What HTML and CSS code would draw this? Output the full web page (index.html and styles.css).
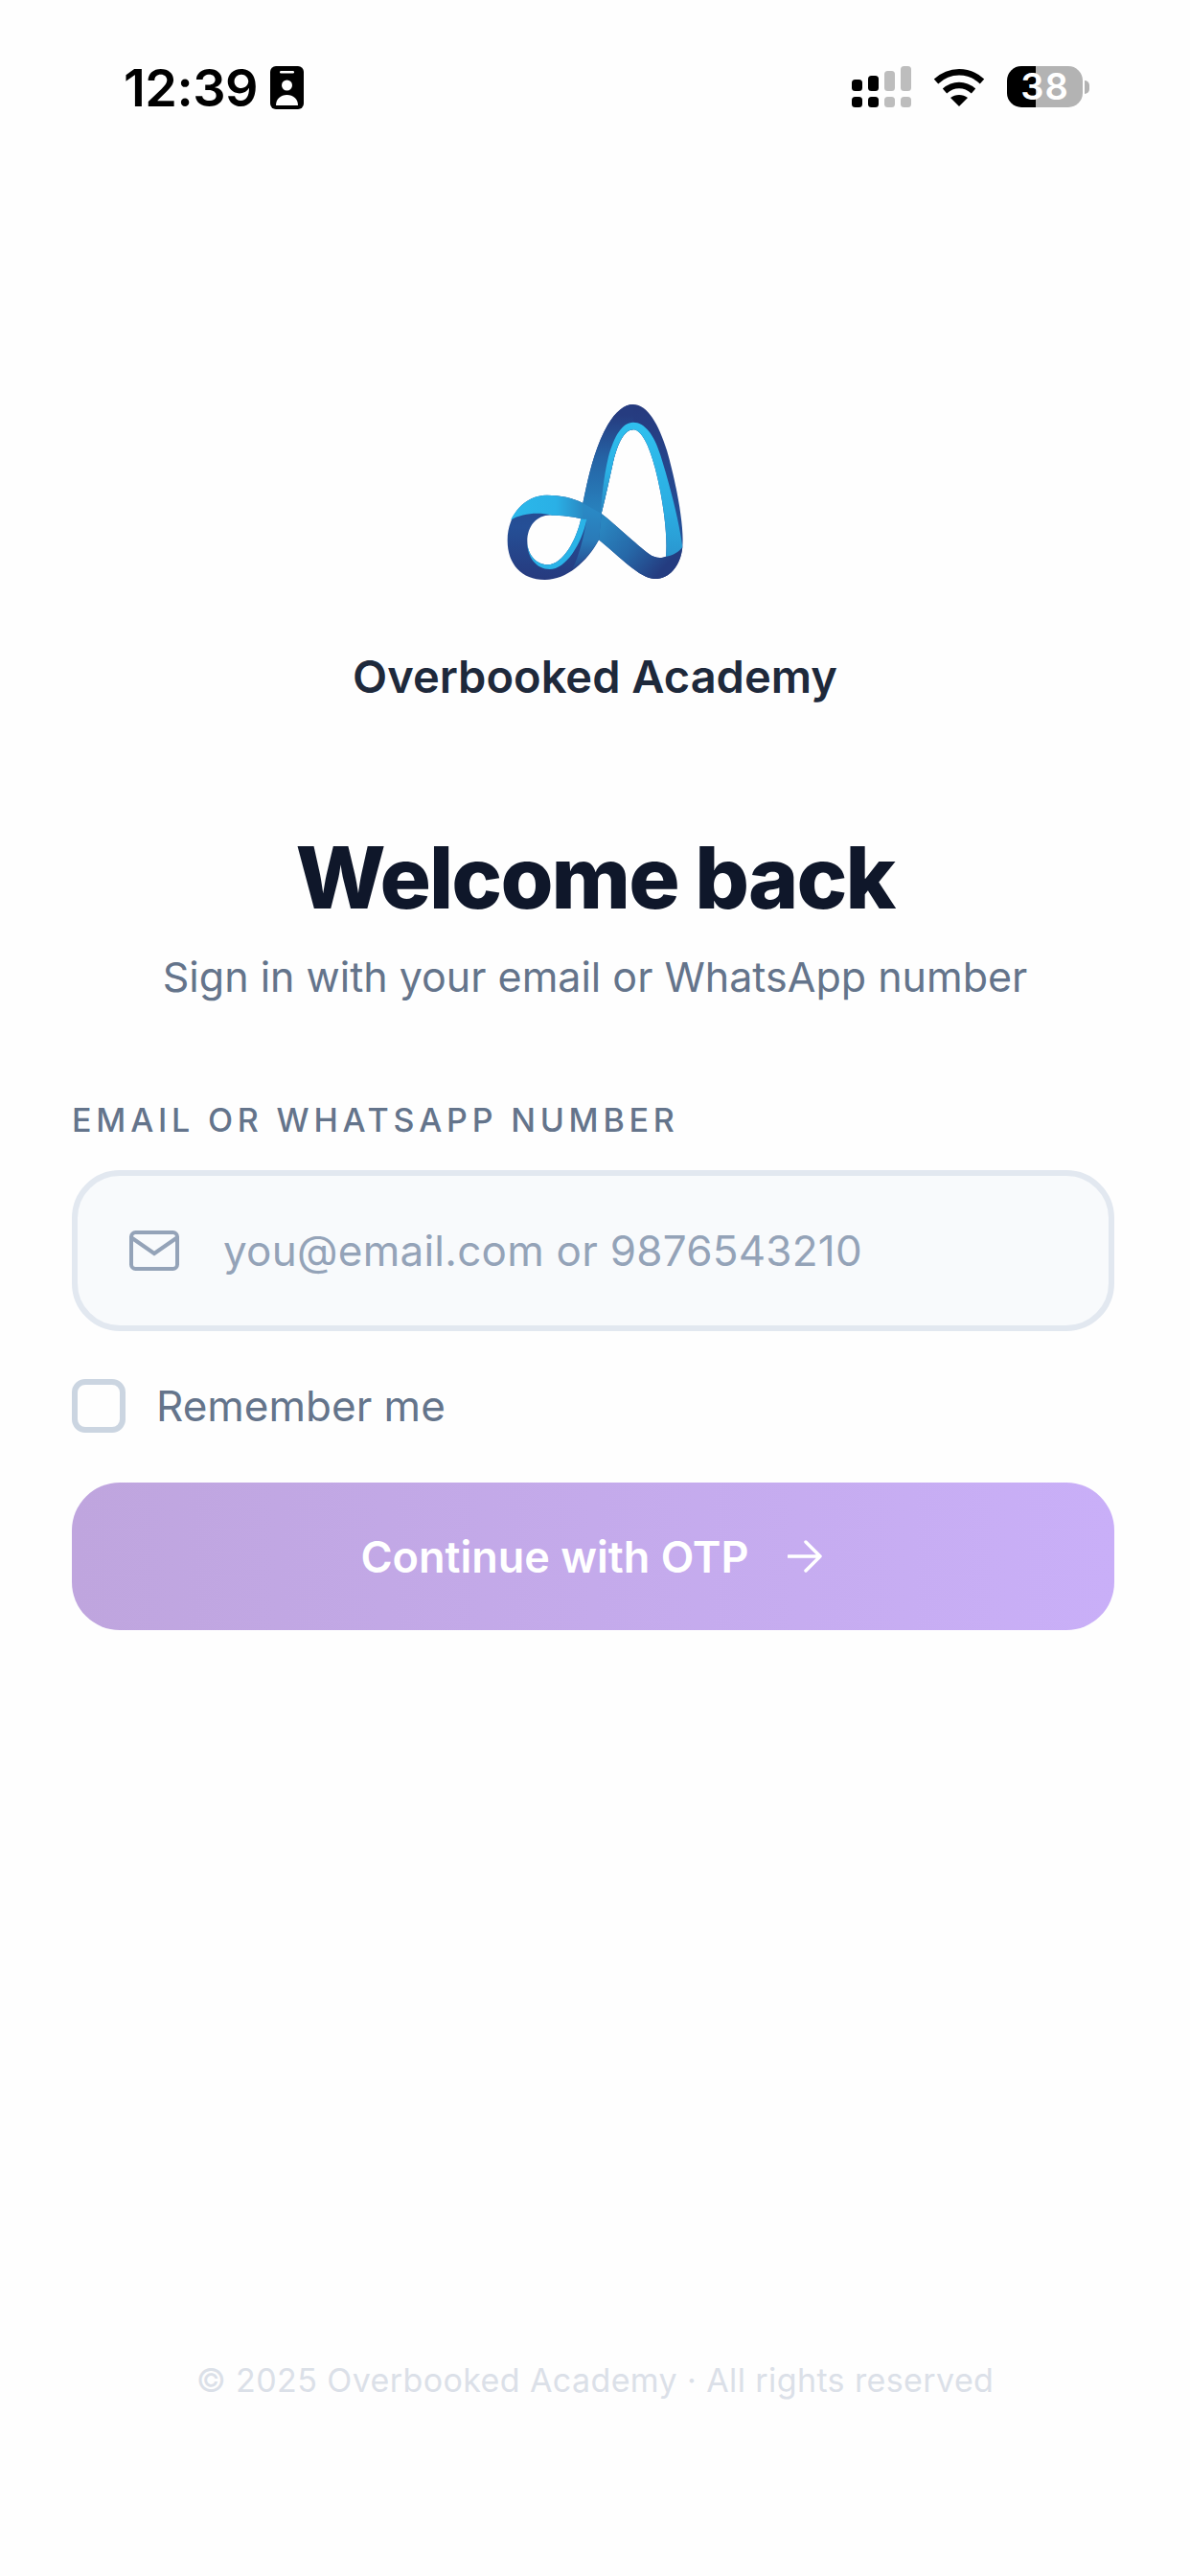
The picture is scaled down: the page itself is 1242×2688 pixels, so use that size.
FILE: index.html
```html
<!DOCTYPE html>
<html lang="en">
<head>
<meta charset="utf-8">
<title>Overbooked Academy</title>
<link rel="stylesheet" href="styles.css">
</head>
<body>
<div class="screen">
  <header class="status">
    <div class="status-left">
      <span class="time">12:39</span>
      <svg class="badge" viewBox="0 0 35 45"><rect width="35" height="45" rx="6" fill="#000"/><rect x="10" y="5" width="15" height="2.5" rx="1.2" fill="#fff"/><circle cx="17.5" cy="20" r="5.5" fill="#fff"/><path d="M6 41c0-7 5-11 11.500-11S29 34 29 41z" fill="#fff"/></svg>
    </div>
    <div class="status-right">
      <svg class="signal" viewBox="0 0 62 43">
        <g fill="#000"><rect x="0" y="14" width="11" height="12" rx="3.500"/><rect x="17" y="10" width="11" height="16" rx="3.500"/><rect x="0" y="32" width="11" height="11" rx="3.500"/><rect x="17" y="32" width="11" height="11" rx="3.500"/></g>
        <g fill="#bdbdbd"><rect x="34" y="5" width="11" height="21" rx="3.500"/><rect x="51" y="0" width="11" height="26" rx="3.500"/><rect x="34" y="32" width="11" height="11" rx="3.500"/><rect x="51" y="32" width="11" height="11" rx="3.500"/></g>
      </svg>
      <svg class="wifi" viewBox="0 0 54 40"><g fill="none" stroke="#000" stroke-width="6.500"><path d="M3 14C17 1 37 1 51 14"/><path d="M12 24c9-8 21-8 30 0"/></g><path d="M18 31c5-4 13-4 18 0l-9 9z" fill="#000"/></svg>
      <div class="battery-wrap">
        <div class="battery">38</div>
        <span class="nub"></span>
      </div>
    </div>
  </header>

  <main class="content">
    <svg class="logo" viewBox="0 0 720 720">
      <defs>
        <linearGradient id="lbase" gradientUnits="userSpaceOnUse" x1="0" y1="66" x2="0" y2="615"><stop offset="0" stop-color="#263a7e"/><stop offset=".7" stop-color="#254f96"/><stop offset="1" stop-color="#263a7e"/></linearGradient>
        <linearGradient id="lflank" gradientUnits="userSpaceOnUse" x1="0" y1="100" x2="0" y2="390"><stop offset="0" stop-color="#263c80"/><stop offset=".45" stop-color="#2562a4"/><stop offset="1" stop-color="#2880bc"/></linearGradient>
        <linearGradient id="ldiag" gradientUnits="userSpaceOnUse" x1="385" y1="440" x2="565" y2="590"><stop offset="0" stop-color="#2a86c0"/><stop offset=".5" stop-color="#2668a8"/><stop offset="1" stop-color="#243c80"/></linearGradient>
        <linearGradient id="lright" gradientUnits="userSpaceOnUse" x1="0" y1="122" x2="0" y2="545"><stop offset="0" stop-color="#2fc0ee"/><stop offset=".65" stop-color="#2bade2"/><stop offset="1" stop-color="#2a96cf"/></linearGradient>
        <linearGradient id="lleft" gradientUnits="userSpaceOnUse" x1="0" y1="122" x2="0" y2="410"><stop offset="0" stop-color="#2fc0ee"/><stop offset=".55" stop-color="#2bb0e4"/><stop offset="1" stop-color="#2a85c0"/></linearGradient>
        <linearGradient id="lcres" gradientUnits="userSpaceOnUse" x1="100" y1="0" x2="330" y2="0"><stop offset="0" stop-color="#2bb8ea"/><stop offset=".6" stop-color="#2ab0e6"/><stop offset="1" stop-color="#2a86c0"/></linearGradient>
        <linearGradient id="lcross" gradientUnits="userSpaceOnUse" x1="0" y1="400" x2="0" y2="585"><stop offset="0" stop-color="#2a88c4"/><stop offset=".5" stop-color="#2a7ab8"/><stop offset="1" stop-color="#25488c"/></linearGradient>
      </defs>
      <path fill-rule="evenodd" fill="url(#lbase)" d="M480 66C525 66 560 130 585 210C610 295 640 440 634 510C628 575 590 614 545 612C500 610 440 545 372 490C335 560 270 616 202 615C130 614 85 565 86 490C87 410 140 350 210 350C250 350 292 358 322 375C340 285 362 195 400 130C425 88 452 66 480 66Z M480 145C450 145 430 190 415 255C403 310 392 360 380 408C420 438 490 505 530 535C548 548 568 548 582 542C588 480 575 370 548 265C530 195 505 145 480 145Z M225 413C180 410 148 445 148 495C148 538 178 568 212 568C260 568 302 490 316 424C290 416 255 414 225 413Z"/>
      <path fill="url(#lflank)" d="M322 375C340 285 362 195 400 130C425 88 452 66 480 66L480 145C450 145 430 190 415 255C403 310 392 360 380 408L372 490L340 480Z"/>
      <path fill="url(#ldiag)" d="M380 408C420 438 490 505 530 535C548 548 568 548 582 542L634 512C628 575 590 614 545 612C500 610 440 545 372 490Z"/>
      <path fill="url(#lcross)" d="M316 424L322 375L380 408L372 490C350 530 320 560 290 580C310 540 325 480 334 425Z"/>
      <path fill="url(#lright)" d="M480 122C515 122 545 160 565 225C595 320 625 440 634 512C622 528 605 538 582 542C588 480 575 370 548 265C530 195 505 145 480 145Z"/>
      <path fill="url(#lleft)" d="M480 122C445 122 420 165 402 230C390 280 382 340 378 400L380 408C392 360 403 310 415 255C430 190 450 145 480 145Z"/>
      <path fill="url(#lcres)" d="M96 428C120 380 160 350 210 350C250 350 292 358 322 375C330 395 325 410 316 424C290 416 255 414 225 413C180 402 130 408 96 428Z"/>
      <path fill="#2ab3e7" d="M148 495C146 545 178 582 218 582C268 582 318 505 334 425L316 424C302 490 260 568 212 568C178 568 148 538 148 495Z"/>
    </svg>
    <p class="brand">Overbooked Academy</p>
    <h1 class="title">Welcome back</h1>
    <p class="subtitle">Sign in with your email or WhatsApp number</p>

    <form class="form">
      <label class="label">EMAIL OR WHATSAPP NUMBER</label>
      <div class="input">
        <svg class="mail" viewBox="0 0 52 42"><rect x="2" y="2" width="48" height="38" rx="4.500" fill="none" stroke="#94a3b8" stroke-width="4"/><path d="M3 8l23 16L49 8" fill="none" stroke="#94a3b8" stroke-width="4"/></svg>
        <span class="placeholder">you@email.com or 9876543210</span>
      </div>
      <div class="remember">
        <span class="checkbox"></span>
        <span class="remember-text">Remember me</span>
      </div>
      <div class="button">
        <span>Continue with OTP</span>
        <svg class="arrow" viewBox="0 0 36 34"><path d="M1 17h33M19 2l15 15-15 15" fill="none" stroke="#fff" stroke-width="3.500" stroke-linecap="round" stroke-linejoin="round"/></svg>
      </div>
    </form>
  </main>

  <footer class="footer">© 2025 Overbooked Academy · All rights reserved</footer>
</div>
</body>
</html>
```
FILE: styles.css
```css
* { box-sizing: border-box; }
html, body { margin: 0; padding: 0; }
body { background: #fff; font-family: Inter, "Liberation Sans", sans-serif; }
.screen { width: 1242px; height: 2688px; display: flex; flex-direction: column; background: #fefefe; overflow: hidden; }
.status { height: 140px; flex: none; display: flex; justify-content: space-between; align-items: flex-start; padding: 69px 105px 0 129px; }
.status-left { display: flex; align-items: center; gap: 13px; }
.time { font-size: 54px; line-height: 45px; font-weight: 600; color: #000; letter-spacing: -0.5px; }
.badge { width: 35px; height: 45px; display: block; }
.status-right { display: flex; align-items: center; gap: 23px; }
.signal { width: 62px; height: 43px; display: block; }
.wifi { width: 54px; height: 40px; display: block; }
.battery-wrap { display: flex; align-items: center; gap: 2px; }
.battery { width: 79px; height: 43px; border-radius: 15px; background: linear-gradient(90deg, #000 38%, #b3b3b3 38%); color: #fff; font-size: 38px; font-weight: 600; line-height: 43px; text-align: center; letter-spacing: 1px; }
.nub { width: 5px; height: 14px; background: #b3b3b3; border-radius: 0 6px 6px 0; }
.content { display: flex; flex-direction: column; align-items: center; padding: 0 79px; }
.logo { width: 240px; height: 240px; margin-top: 260px; display: block; flex: none; filter: blur(0.6px); }
.brand { margin: 36px 0 0; font-size: 47px; line-height: 60px; font-weight: 600; color: #1e293b; }
.title { margin: 130px 0 0; font-size: 89px; line-height: 100px; font-weight: 800; color: #0f172a; letter-spacing: -1.900px; }
.subtitle { margin: 23px 0 0; font-size: 43px; line-height: 60px; font-weight: 400; color: #64748b; }
.form { margin-left: -4px; width: 1088px; display: flex; flex-direction: column; align-self: stretch; }
.label { margin-top: 98px; font-size: 34px; line-height: 44px; font-weight: 500; letter-spacing: 4.800px; color: #64748b; }
.input { margin-top: 30px; height: 168px; border: 6px solid #e2e8f0; border-radius: 50px; background: #f8fafc; display: flex; align-items: center; padding-left: 54px; gap: 46px; }
.mail { width: 52px; height: 42px; flex: none; display: block; }
.placeholder { font-size: 44px; letter-spacing: 0.250px; color: #94a3b8; }
.remember { margin-top: 50px; display: flex; align-items: center; gap: 32px; }
.checkbox { width: 56px; height: 56px; border: 6px solid #cbd5e1; border-radius: 14px; flex: none; }
.remember-text { font-size: 44px; line-height: 56px; color: #64748b; font-weight: 400; }
.button { margin-top: 52px; height: 154px; padding-right: 4px; border-radius: 50px; background: linear-gradient(90deg, #bfa5de, #c9aff8); display: flex; align-items: center; justify-content: center; gap: 40px; color: #fff; font-size: 45px; font-weight: 600; }
.arrow { width: 36px; height: 34px; flex: none; display: block; }
.footer { margin-top: auto; padding-bottom: 182px; text-align: center; font-size: 34px; line-height: 44px; color: #dbe0e8; letter-spacing: 0.400px; }
```
